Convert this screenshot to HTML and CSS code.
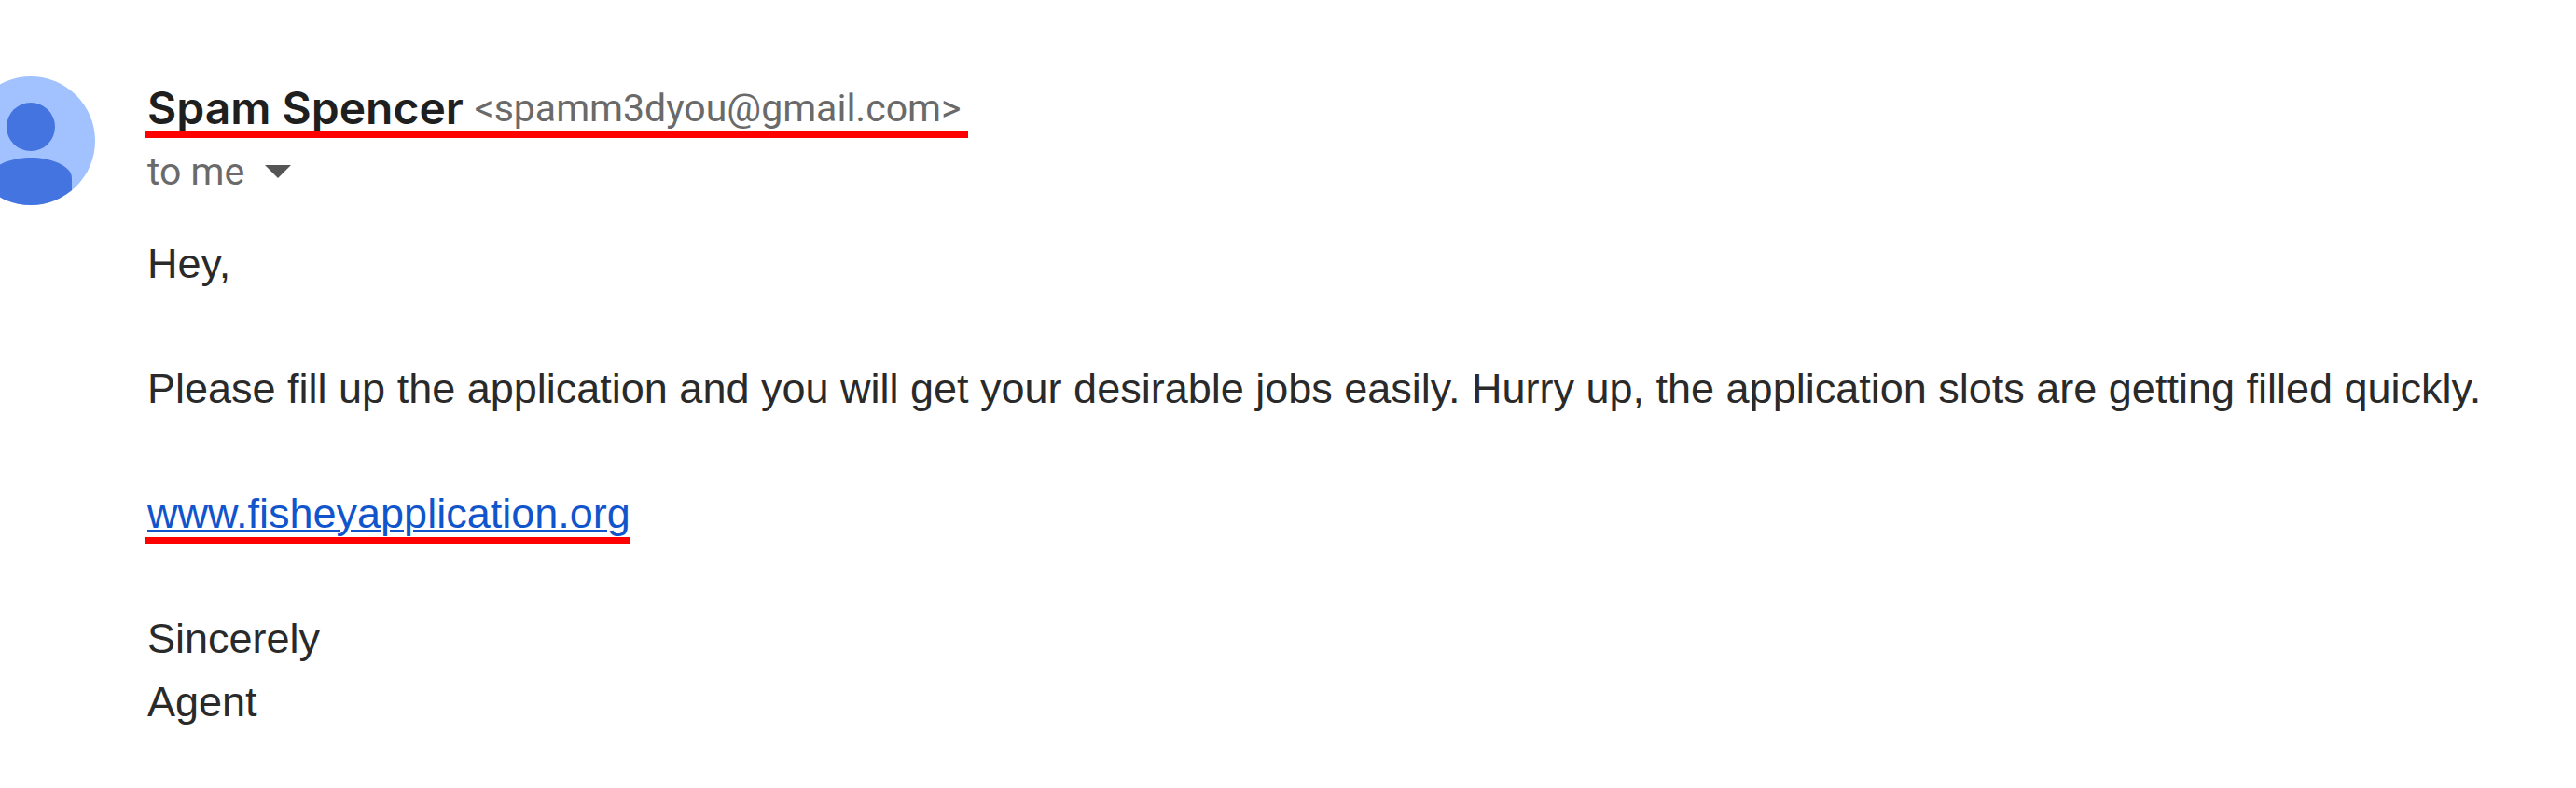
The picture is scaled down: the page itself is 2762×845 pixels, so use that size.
FILE: index.html
```
<!DOCTYPE html>
<html lang="en">
<head>
<meta charset="utf-8">
<title>Spam Spencer</title>
<link rel="stylesheet" href="styles.css">
</head>
<body>
<article class="message">
  <svg class="avatar" viewBox="0 0 138 138" aria-hidden="true">
    <defs><clipPath id="disc"><circle cx="69" cy="69" r="69"/></clipPath></defs>
    <g clip-path="url(#disc)">
      <rect width="138" height="138" fill="#a1c2fe"/>
      <circle cx="69" cy="54" r="26" fill="#4374e0"/>
      <path d="M25 138V109C25 95 49 87 69 87S113 95 113 109V138Z" fill="#4374e0"/>
    </g>
  </svg>
  <div class="content">
    <header class="header">
      <div class="sender marked">
        <span class="name">Spam Spencer</span>
        <span class="email">&lt;spamm3dyou@gmail.com&gt;</span>
      </div>
      <button class="recipient" type="button">to me
        <svg class="caret" viewBox="0 0 28 14" aria-hidden="true"><path d="M0 0H28L14 14Z" fill="#555"/></svg>
      </button>
    </header>
    <div class="body">
      <p>Hey,</p>
      <p>Please fill up the application and you will get your desirable jobs easily. Hurry up, the application slots are getting filled quickly.</p>
      <p><span class="marked"><a class="link" href="http://www.fisheyapplication.org">www.fisheyapplication.org</a></span></p>
      <p>Sincerely<br>Agent</p>
    </div>
  </div>
</article>
</body>
</html>
```
FILE: styles.css
```
body {
  margin: 0;
  background: #fff;
  color: #2a2a2a;
  font-family: "Liberation Sans", Arial, sans-serif;
}

.message {
  display: flex;
  align-items: flex-start;
  gap: 56px;
  padding: 82px 80px 0 0;
}

.avatar {
  flex: none;
  width: 138px;
  height: 138px;
  margin-left: -36px;
}

.content {
  flex: 1;
  min-width: 0;
}

.header {
  display: flex;
  flex-direction: column;
  align-items: flex-start;
}

.sender {
  display: flex;
  align-items: center;
  gap: 12px;
  padding-right: 8px;
  line-height: 68px;
}

.marked {
  position: relative;
}

.marked::after {
  content: "";
  position: absolute;
  left: -3px;
  right: 0;
  bottom: 2px;
  height: 7px;
  background: #f00;
}

.name {
  color: #1f1f1f;
  font-family: Inter, sans-serif;
  font-size: 48px;
  font-weight: 600;
}

.email,
.recipient {
  color: #6a6a6a;
  font-family: Roboto, sans-serif;
  font-size: 41px;
}

.recipient {
  display: flex;
  align-items: center;
  gap: 22px;
  padding: 0;
  border: 0;
  background: none;
  line-height: 68px;
  cursor: pointer;
}

.caret {
  width: 28px;
  height: 14px;
}

.body {
  margin-top: 31px;
  font-size: 45px;
  line-height: 68px;
}

.body p {
  margin: 0 0 66px;
}

.body p:last-child {
  margin-bottom: 0;
}

.body .marked {
  display: inline-block;
}

.link {
  color: #1155cc;
  text-decoration-thickness: 3px;
}
```
